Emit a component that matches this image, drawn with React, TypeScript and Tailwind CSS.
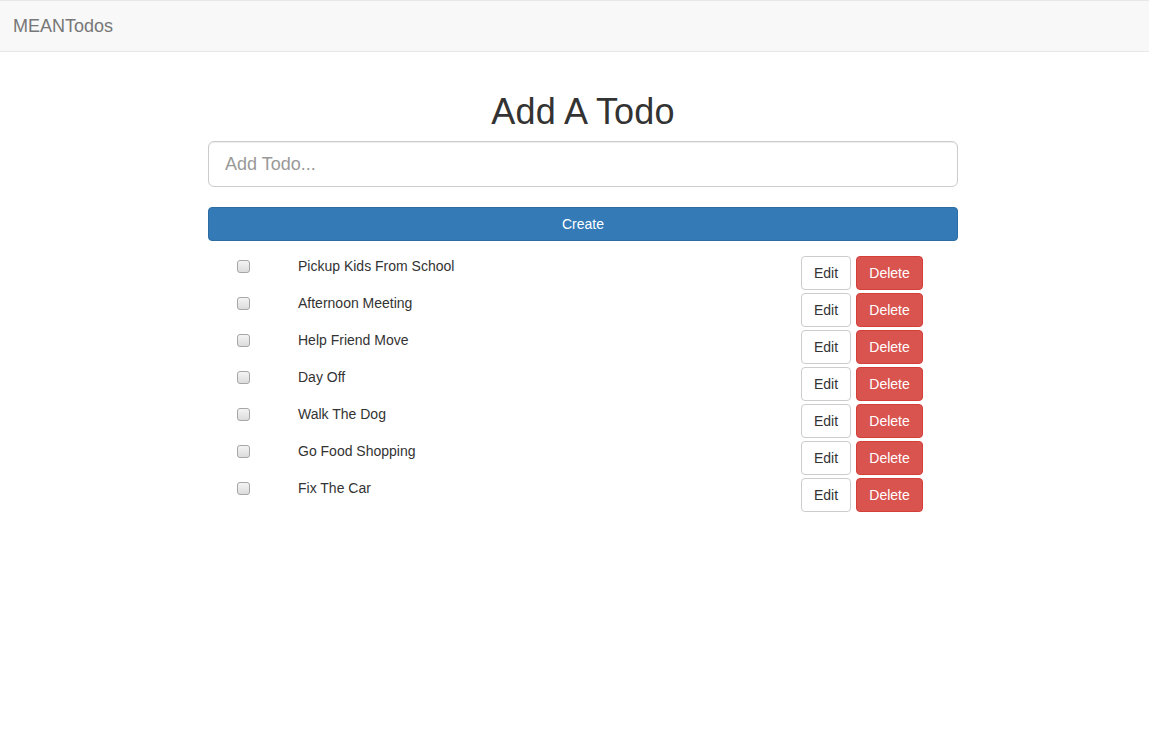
const todos = [
  "Pickup Kids From School",
  "Afternoon Meeting",
  "Help Friend Move",
  "Day Off",
  "Walk The Dog",
  "Go Food Shopping",
  "Fix The Car",
];

function Checkbox() {
  return (
    <span className="mt-1 block w-[13px] h-[13px] rounded-[3px] border border-[#a6a6a6] bg-gradient-to-b from-[#f4f4f4] to-[#dcdcdc]" />
  );
}

export default function App() {
  return (
    <div className="min-h-screen bg-white text-[14px] text-[#333] font-['Liberation_Sans',Arial,sans-serif]">
      {/* Navbar */}
      <nav className="h-[52px] bg-[#f8f8f8] border-y border-[#e7e7e7] flex items-center px-[13px]">
        <span className="text-[18px] text-[#777] leading-5">MEANTodos</span>
      </nav>

      {/* Main */}
      <main className="ml-[208px] w-[750px] pt-[40px]">
        <h1 className="text-[36px] leading-[39px] text-center font-normal text-[#333] mb-[10px] tracking-[0.2px]">Add A Todo</h1>
        <input
          type="text"
          placeholder="Add Todo..."
          className="block w-full h-[46px] px-4 text-[18px] rounded-[6px] border border-[#ccc] shadow-[inset_0_1px_1px_rgba(0,0,0,0.075)] placeholder:text-[#999] outline-none"
        />
        <button className="mt-5 block w-full h-[34px] rounded-[4px] bg-[#337ab7] border border-[#2e6da4] text-white text-[14px]">
          Create
        </button>

        <ul className="mt-[15px]">
          {todos.map((t) => (
            <li key={t} className="flex items-start h-[37px]">
              <div className="w-[90px] pl-[29px]">
                <Checkbox />
              </div>
              <div className="flex-1 leading-5">{t}</div>
              <div className="flex gap-[5px] pr-[35px]">
                <button className="w-[50px] h-[34px] rounded-[4px] border border-[#ccc] bg-white text-[#333]">Edit</button>
                <button className="w-[67px] h-[34px] rounded-[4px] border border-[#d43f3a] bg-[#d9534f] text-white">Delete</button>
              </div>
            </li>
          ))}
        </ul>
      </main>
    </div>
  );
}
